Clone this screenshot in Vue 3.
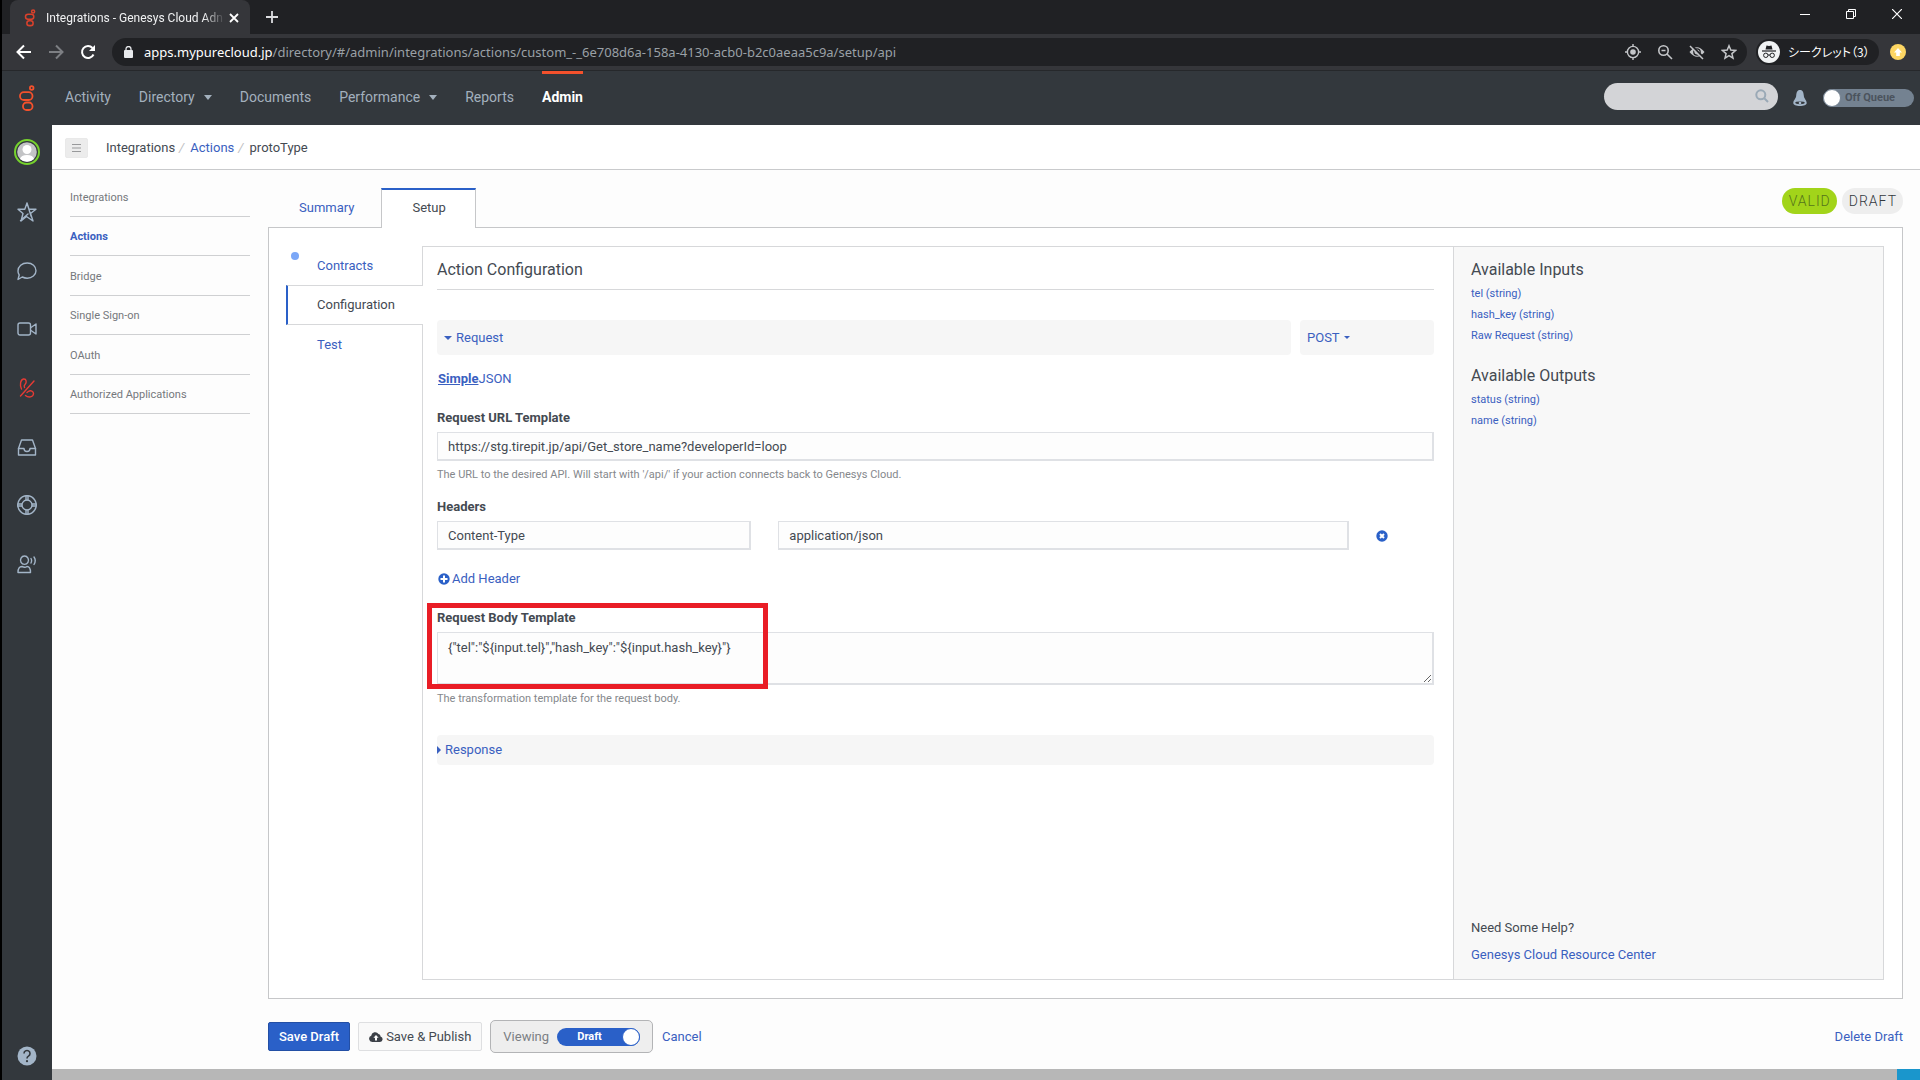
<template>
  <div class="screen">
    <div class="titlebar">
      <div class="browser-tab">
        <svg class="favicon" width="12" height="18" viewBox="0 0 16 26">
          <g fill="none" stroke="#d9412c" stroke-width="2.2">
            <circle cx="12.5" cy="3.5" r="2.2" />
            <rect x="1.5" y="7.5" width="12" height="7.5" rx="3.7" />
            <rect x="3.5" y="17" width="9" height="7" rx="3.5" />
          </g>
        </svg>
        <span class="browser-tab-title">Integrations - Genesys Cloud Adn</span>
        <button class="icon-button" aria-label="Close tab">
          <svg width="10" height="10" viewBox="0 0 10 10" stroke="#fff" stroke-width="1.8">
            <path d="M1 1l8 8M9 1l-8 8" />
          </svg>
        </button>
      </div>
      <button class="icon-button new-tab" aria-label="New tab">
        <svg width="12" height="12" viewBox="0 0 12 12" stroke="#dcdde0" stroke-width="1.8">
          <path d="M6 0v12M0 6h12" />
        </svg>
      </button>
      <div class="window-buttons">
        <button class="icon-button" aria-label="Minimize">
          <svg width="10" height="10" viewBox="0 0 10 10" stroke="#fff"><path d="M0 5.5h10" /></svg>
        </button>
        <button class="icon-button" aria-label="Restore">
          <svg width="10" height="10" viewBox="0 0 10 10" fill="none" stroke="#fff">
            <path d="M.5 2.5h7v7h-7zM2.5 2.5v-2h7v7h-2" />
          </svg>
        </button>
        <button class="icon-button" aria-label="Close">
          <svg width="10" height="10" viewBox="0 0 10 10" stroke="#fff" stroke-width="1.2">
            <path d="M0 0l10 10M10 0L0 10" />
          </svg>
        </button>
      </div>
    </div>

    <div class="toolbar">
      <button class="icon-button" aria-label="Back">
        <svg width="16" height="16" viewBox="0 0 16 16" fill="none" stroke="#fff" stroke-width="2">
          <path d="M15 8H2M8 1.5L1.5 8 8 14.5" />
        </svg>
      </button>
      <button class="icon-button" aria-label="Forward">
        <svg width="16" height="16" viewBox="0 0 16 16" fill="none" stroke="#7d7f83" stroke-width="2">
          <path d="M1 8h13M8 1.5L14.5 8 8 14.5" />
        </svg>
      </button>
      <button class="icon-button" aria-label="Reload">
        <svg width="16" height="16" viewBox="0 0 16 16" fill="none" stroke="#fff" stroke-width="2">
          <path d="M13.5 10.5A6 6 0 1 1 12.5 4" />
          <path d="M15 1v6H9z" fill="#fff" stroke="none" />
        </svg>
      </button>
      <div class="address">
        <svg width="9" height="12" viewBox="0 0 9 12">
          <rect y="4" width="9" height="8" rx="1" fill="#e8eaed" />
          <path d="M2 5V3a2.5 2.5 0 0 1 5 0v2" fill="none" stroke="#e8eaed" stroke-width="1.3" />
        </svg>
        <span class="url"><span class="url-host">apps.mypurecloud.jp</span>/directory/#/admin/integrations/actions/custom_-_6e708d6a-158a-4130-acb0-b2c0aeaa5c9a/setup/api</span>
        <div class="address-icons">
          <svg width="16" height="16" viewBox="0 0 16 16" fill="none" stroke="#c4c6c9" stroke-width="1.4">
            <circle cx="8" cy="8" r="5.6" />
            <circle cx="8" cy="8" r="2.8" fill="#c4c6c9" stroke="none" />
            <path d="M8 0v3M8 13v3M0 8h3M13 8h3" />
          </svg>
          <svg width="16" height="16" viewBox="0 0 16 16" fill="none" stroke="#c4c6c9" stroke-width="1.6">
            <circle cx="6.5" cy="6.5" r="4.7" />
            <path d="M4.5 6.5h4M10 10l5 5" />
          </svg>
          <svg width="16" height="16" viewBox="0 0 16 16">
            <path d="M.5 8Q8-1.500 15.5 8 8 17.5.5 8z" fill="#c4c6c9" />
            <circle cx="8" cy="8" r="3.2" fill="none" stroke="#202124" stroke-width="1.3" />
            <path d="M1.5.5l14 14" stroke="#202124" stroke-width="2" />
            <path d="M1 2l13 13" stroke="#c4c6c9" stroke-width="1.5" />
          </svg>
          <svg width="16" height="16" viewBox="0 0 16 16" fill="none" stroke="#c4c6c9" stroke-width="1.5">
            <path d="M8 1.8l1.8 4.300 4.700.4-3.600 3.100 1.100 4.600L8 11.700l-4 2.500 1.100-4.600L1.500 6.500l4.700-.4z" />
          </svg>
        </div>
      </div>
      <div class="incognito">
        <svg width="22" height="22" viewBox="0 0 22 22">
          <circle cx="11" cy="11" r="11" fill="#f1f3f4" />
          <path d="M7.5 8.500l1-4 2.500.6 2.500-.6 1 4z" fill="#202124" />
          <path d="M4 10h14" stroke="#202124" stroke-width="1.2" />
          <g fill="none" stroke="#202124">
            <circle cx="7.8" cy="14.3" r="2.2" />
            <circle cx="14.2" cy="14.3" r="2.2" />
            <path d="M10 14h2" />
          </g>
        </svg>
        <span>シークレット（3）</span>
      </div>
      <button class="icon-button" aria-label="Update">
        <svg width="16" height="16" viewBox="0 0 16 16">
          <circle cx="8" cy="8" r="8" fill="#fdd663" />
          <path d="M8 4l4 4.500H9.800V12H6.200V8.500H4z" fill="#fff" />
        </svg>
      </button>
    </div>

    <header class="app-header">
      <svg class="logo" width="16" height="26" viewBox="0 0 16 26">
        <g fill="none" stroke="#f4512c" stroke-width="1.8">
          <circle cx="12.7" cy="3" r="1.8" />
          <rect x="1" y="7.2" width="12.5" height="7.8" rx="3.8" />
          <rect x="4" y="17.5" width="9.5" height="7.5" rx="3.5" />
        </g>
      </svg>
      <nav class="main-nav">
        <a
          v-for="item in mainNav"
          :key="item.label"
          href="#"
          :class="{ active: item.active }"
        >
          {{ item.label }}
          <svg v-if="item.menu" width="8" height="5" viewBox="0 0 8 5">
            <path d="M0 0h8L4 5z" fill="currentColor" />
          </svg>
        </a>
      </nav>
      <div class="search">
        <input type="text" aria-label="Search" />
        <svg width="14" height="14" viewBox="0 0 14 14" fill="none" stroke="#9aa9b6" stroke-width="2">
          <circle cx="5.8" cy="5.8" r="4.5" />
          <path d="M9 9l4 4" />
        </svg>
      </div>
      <svg width="14" height="16" viewBox="0 0 14 16">
        <path d="M7 0C4 0 3.500 2.500 3.200 5.500 3 9 .3 10 .3 13c0 2 3 3 6.700 3s6.700-1 6.700-3c0-3-2.700-4-2.900-7.500C10.500 2.500 10 0 7 0z" fill="#a3b5c8" />
        <ellipse cx="7" cy="12.8" rx="4.8" ry="1.4" fill="#33383d" />
        <circle cx="7" cy="13" r="1.3" fill="#a3b5c8" />
      </svg>
      <label class="queue-switch">
        <input type="checkbox" />
        <span>Off Queue</span>
      </label>
    </header>

    <div class="workspace">
      <aside class="rail">
        <svg width="26" height="26" viewBox="0 0 26 26">
          <circle cx="13" cy="13" r="12" fill="#33383d" stroke="#76d22d" stroke-width="2" />
          <circle cx="13" cy="13" r="9.8" fill="#c3c4c6" />
          <circle cx="13" cy="10.5" r="4.5" fill="#fff" />
          <path d="M6 20q1-4 7-4t7 4q-3 2.800-7 2.800T6 20z" fill="#fff" />
        </svg>
        <div class="rail-icons">
          <button v-for="icon in railIcons" :key="icon.name" class="icon-button" :aria-label="icon.name">
            <svg
              width="20"
              height="20"
              viewBox="0 0 20 20"
              fill="none"
              :stroke="icon.color || '#a3b5c8'"
              stroke-width="1.4"
              stroke-linejoin="round"
              stroke-linecap="round"
            >
              <path v-for="d in icon.paths" :key="d" :d="d" />
            </svg>
          </button>
        </div>
        <button class="icon-button help" aria-label="Help">
          <svg width="20" height="20" viewBox="0 0 20 20">
            <circle cx="10" cy="10" r="9.5" fill="#a3b5c8" />
            <path d="M7 7.500a3 3 0 1 1 4.500 2.600Q10 11 10 12.500" fill="none" stroke="#33383d" stroke-width="1.6" />
            <circle cx="10" cy="15.2" r="1.1" fill="#33383d" />
          </svg>
        </button>
      </aside>

      <main class="page">
        <div class="breadcrumbs">
          <button class="menu-button" aria-label="Toggle menu">
            <svg width="9" height="8" viewBox="0 0 9 8" stroke="#98999b"><path d="M0 .5h9M0 4h9M0 7.500h9" /></svg>
          </button>
          <span>Integrations</span><i>/</i><a href="#">Actions</a><i>/</i><span>protoType</span>
        </div>

        <div class="page-body">
          <ul class="side-menu">
            <li v-for="name in sideMenu" :key="name">
              <a href="#" :class="{ active: name === 'Actions' }">{{ name }}</a>
            </li>
          </ul>

          <section class="content">
            <div class="tabs">
              <a href="#" class="tab">Summary</a>
              <a href="#" class="tab active">Setup</a>
              <div class="badges">
                <span class="badge valid">VALID</span>
                <span class="badge">DRAFT</span>
              </div>
            </div>

            <div class="panel">
              <nav class="steps">
                <a href="#" class="step changed">Contracts</a>
                <a href="#" class="step active">Configuration</a>
                <a href="#" class="step">Test</a>
              </nav>

              <div class="config">
                <h1>Action Configuration</h1>
                <div class="request-row">
                  <button class="bar request">
                    <svg width="8" height="4" viewBox="0 0 8 4"><path d="M0 0h8L4 4z" fill="currentColor" /></svg>
                    Request
                  </button>
                  <label class="bar method">
                    <select v-model="method" aria-label="Method">
                      <option>POST</option>
                    </select>
                    <svg width="6" height="3" viewBox="0 0 6 3"><path d="M0 0h6L3 3z" fill="currentColor" /></svg>
                  </label>
                </div>
                <div class="modes"><a href="#" class="selected">Simple</a><a href="#">JSON</a></div>

                <label class="field-label" for="url">Request URL Template</label>
                <input id="url" v-model="url" type="text" class="field" />
                <p class="hint">The URL to the desired API. Will start with '/api/' if your action connects back to Genesys Cloud.</p>

                <label class="field-label" for="header-name">Headers</label>
                <div class="header-row">
                  <input id="header-name" v-model="headerName" type="text" class="field" />
                  <input v-model="headerValue" type="text" class="field" aria-label="Header value" />
                  <button class="icon-button remove" aria-label="Remove header">
                    <svg width="12" height="12" viewBox="0 0 12 12">
                      <circle cx="6" cy="6" r="5.7" fill="#2a60c8" />
                      <path d="M4 4l4 4M8 4L4 8" stroke="#fff" stroke-width="2" />
                    </svg>
                  </button>
                </div>
                <button class="add-header">
                  <svg width="12" height="12" viewBox="0 0 12 12">
                    <circle cx="6" cy="6" r="5.7" fill="#2a60c8" />
                    <path d="M6 2.500v7M2.500 6h7" stroke="#fff" stroke-width="2" />
                  </svg>
                  Add Header
                </button>

                <div class="body-field">
                  <label class="field-label" for="body">Request Body Template</label>
                  <textarea id="body" v-model="body" class="field"></textarea>
                  <div class="marker"></div>
                </div>
                <p class="hint">The transformation template for the request body.</p>

                <button class="bar response">
                  <svg width="4" height="8" viewBox="0 0 4 8"><path d="M0 0v8l4-4z" fill="currentColor" /></svg>
                  Response
                </button>
              </div>

              <aside class="info">
                <h2>Available Inputs</h2>
                <a v-for="name in inputs" :key="name" href="#">{{ name }}</a>
                <h2>Available Outputs</h2>
                <a v-for="name in outputs" :key="name" href="#">{{ name }}</a>
                <div class="info-help">
                  <p>Need Some Help?</p>
                  <a href="#">Genesys Cloud Resource Center</a>
                </div>
              </aside>
            </div>

            <div class="actions">
              <button class="button primary">Save Draft</button>
              <button class="button">
                <svg width="14" height="10" viewBox="0 0 14 10">
                  <path d="M3.200 10a3.200 3.200 0 0 1-1-6.200A4 4 0 0 1 9.500 2a2.300 2.300 0 0 1 2 2.500A2.800 2.800 0 0 1 11 10z" fill="#3c4148" />
                  <path d="M7 3l2.600 2.800H8V8.500H6V5.800H4.400z" fill="#fff" />
                </svg>
                Save &amp; Publish
              </button>
              <label class="viewing">
                Viewing
                <span class="draft-switch">
                  <span>Draft</span>
                  <input v-model="viewDraft" type="checkbox" />
                </span>
              </label>
              <a href="#">Cancel</a>
              <a href="#" class="delete">Delete Draft</a>
            </div>
          </section>
        </div>
        <div class="bottom-bar"></div>
      </main>
    </div>
  </div>
</template>

<script setup>
import { ref } from 'vue';

const mainNav = [
  { label: 'Activity' },
  { label: 'Directory', menu: true },
  { label: 'Documents' },
  { label: 'Performance', menu: true },
  { label: 'Reports' },
  { label: 'Admin', active: true },
];

const railIcons = [
  {
    name: 'Favorites',
    paths: ['M10 1l2 6.200h7l-5.500 4.300 2.500 7.500-6.500-4.500-5.500 4.500 2-7.500L1 7.200h6.800zM10 1l4 13M3.500 18.500L11 12'],
  },
  {
    name: 'Chat',
    paths: ['M1 18.500l1.200-4.500A8 7 0 0 1 1 10C1 5.500 5 2 10.200 2S19 5.500 19 9.700s-4 7.500-8.800 7.500c-2 0-3.500-.5-5-1.200z'],
  },
  {
    name: 'Video',
    paths: ['M3 4h8.500a2 2 0 0 1 2 2v8a2 2 0 0 1-2 2H3a2 2 0 0 1-2-2V6a2 2 0 0 1 2-2z', 'M14 8.500L19 5v10l-5-3.500'],
  },
  {
    name: 'Phone',
    color: '#e63b35',
    paths: ['M17 3L3.500 18', 'M4.500 11C2.500 7 3.500 1.500 6.500 1c3-.3 3.500 3.500 1.500 5.500-1 1-1 2-.5 3', 'M8.500 17.500c3 2.500 7.500 1.500 8-1.500.3-3-3-4-5.200-2.500l-1.300 1'],
  },
  {
    name: 'Inbox',
    paths: ['M1.500 18V11.500L4.500 3h11l3 8.500V18z', 'M1.500 11.500h5.500q0 3 3 3t3-3h5.500'],
  },
  {
    name: 'Support',
    paths: ['M10 .8a9.200 9.200 0 1 0 .01 0z', 'M10 5a5 5 0 1 0 .01 0z', 'M9 1v4M11 1v4M9 15v4M11 15v4M1 9h4M1 11h4M15 9h4M15 11h4'],
  },
  {
    name: 'Agent',
    paths: ['M7.500 2a4 4.200 0 1 0 .01 0z', 'M1 18.500c0-4 2-6 4-6 2 1 3.500 1 5 0 2 0 3.500 2 3.500 6z', 'M14 4.500q1.200 2 0 4.500M17 3q2.500 3.500 0 7.500'],
  },
];

const sideMenu = ['Integrations', 'Actions', 'Bridge', 'Single Sign-on', 'OAuth', 'Authorized Applications'];

const inputs = ['tel (string)', 'hash_key (string)', 'Raw Request (string)'];
const outputs = ['status (string)', 'name (string)'];

const method = ref('POST');
const url = ref('https://stg.tirepit.jp/api/Get_store_name?developerId=loop');
const headerName = ref('Content-Type');
const headerValue = ref('application/json');
const body = ref('{"tel":"${input.tel}","hash_key":"${input.hash_key}"}');
const viewDraft = ref(true);
</script>

<style>
body {
  background: #000;
}
</style>

<style scoped>
.screen {
  box-sizing: border-box;
  min-height: 100vh;
  display: flex;
  flex-direction: column;
  border-left: 2px solid #000;
  background: #fdfdfd;
  color: #444a52;
  font-family: Roboto, sans-serif;
  font-size: 13px;
  line-height: 16px;
}

.screen * {
  box-sizing: border-box;
}

svg {
  display: block;
  flex: none;
}

a {
  color: #3a60c0;
  text-decoration: none;
}

button,
input,
select,
textarea {
  font: inherit;
  color: inherit;
}

.icon-button {
  display: flex;
  align-items: center;
  justify-content: center;
  padding: 0;
  background: none;
  border: none;
  cursor: pointer;
}

/* browser window */
.titlebar {
  display: flex;
  height: 34px;
  padding-left: 8px;
  background: #202124;
}

.browser-tab {
  display: flex;
  align-items: center;
  width: 240px;
  padding: 2px 11px 0 14px;
  border-radius: 8px 8px 0 0;
  background: #35363a;
}

.browser-tab-title {
  flex: 1;
  margin: 0 4px 0 10px;
  overflow: hidden;
  white-space: nowrap;
  color: #f0f1f2;
  font-size: 12px;
  mask-image: linear-gradient(to right, #000 88%, transparent);
}

.new-tab {
  margin-left: 16px;
}

.window-buttons {
  display: flex;
  margin-left: auto;
}

.window-buttons .icon-button {
  width: 46px;
  height: 28px;
}

.toolbar {
  display: flex;
  align-items: center;
  gap: 16px;
  height: 37px;
  padding: 0 14px;
  background: #35363a;
  border-bottom: 1px solid #26282b;
}

.address {
  display: flex;
  flex: 1;
  align-items: center;
  height: 28px;
  margin-right: -7px;
  padding: 0 10px 0 12px;
  border-radius: 14px;
  background: #202124;
}

.url {
  margin-left: 11px;
  color: #9aa0a6;
  font-family: 'Noto Sans', sans-serif;
  font-size: 13px;
}

.url-host {
  color: #fff;
}

.address-icons {
  display: flex;
  gap: 16px;
  margin-left: auto;
}

.incognito {
  display: flex;
  align-items: center;
  gap: 8px;
  width: 123px;
  height: 26px;
  padding-left: 2px;
  border-radius: 13px;
  background: #202124;
  color: #fff;
  font-family: 'Noto Sans CJK JP', sans-serif;
  font-size: 12px;
  font-feature-settings: 'palt';
  white-space: nowrap;
}

.toolbar > .icon-button:last-child {
  margin-left: -5px;
}

/* application header */
.app-header {
  display: flex;
  align-items: center;
  height: 54px;
  padding-right: 6px;
  background: #33383d;
}

.logo {
  margin: 0 21px 0 17px;
}

.main-nav {
  display: flex;
  align-self: stretch;
  gap: 28px;
  margin-left: 9px;
}

.main-nav a {
  display: flex;
  align-items: center;
  gap: 9px;
  padding-bottom: 5px;
  border-top: 3px solid transparent;
  color: #a3b0bd;
  font-size: 14px;
}

.main-nav .active {
  border-color: #f4512c;
  color: #fff;
  font-weight: 700;
}

.search {
  display: flex;
  align-items: center;
  width: 174px;
  height: 27px;
  margin: 0 15px 4px auto;
  padding: 0 9px 0 12px;
  border-radius: 14px;
  background: #d3d4d7;
}

.search input {
  flex: 1;
  min-width: 0;
  padding: 0;
  border: none;
  outline: none;
  background: none;
}

.queue-switch {
  display: flex;
  align-items: center;
  gap: 4px;
  width: 91px;
  height: 18px;
  margin-left: 16px;
  border-radius: 9px;
  background: #748291;
  color: #4b535d;
  font-size: 11px;
  font-weight: 700;
}

.queue-switch input,
.draft-switch input {
  width: 18px;
  height: 18px;
  margin: 0;
  appearance: none;
  border: 1px solid #748291;
  border-radius: 50%;
  background: #fff;
}

.workspace {
  display: flex;
  flex: 1;
}

.rail {
  display: flex;
  flex-direction: column;
  align-items: center;
  width: 50px;
  padding: 14px 0;
  background: #33383d;
}

.rail-icons {
  display: grid;
  grid-auto-rows: 1fr;
  height: 410px;
  margin-top: 18px;
}

.help {
  margin-top: auto;
}

.page {
  display: flex;
  flex: 1;
  flex-direction: column;
}

.breadcrumbs {
  display: flex;
  align-items: center;
  height: 45px;
  padding: 1px 0 0 13px;
  border-bottom: 1px solid #c9cacc;
  background: #fff;
}

.menu-button {
  display: flex;
  align-items: center;
  justify-content: center;
  width: 23px;
  height: 20px;
  margin-right: 18px;
  padding: 0;
  border: 1px solid #e9e9e9;
  border-radius: 2px;
  background: #ececec;
}

.breadcrumbs i {
  margin: 0 6px 0 4px;
  color: #c0c1c3;
}

.page-body {
  display: flex;
  flex: 1;
  gap: 18px;
  padding: 18px 17px 16px 18px;
}

.side-menu {
  display: grid;
  grid-auto-rows: 1fr;
  width: 180px;
  height: 237px;
  margin: -11px 0 0;
  padding: 0;
  list-style: none;
}

.side-menu li {
  display: flex;
  align-items: center;
  padding-top: 3px;
  border-bottom: 1px solid #cfd0d2;
}

.side-menu a {
  color: #75787c;
  font-size: 11px;
}

.side-menu .active {
  color: #3a60c0;
  font-weight: 700;
}

.content {
  display: flex;
  flex: 1;
  flex-direction: column;
}

.tabs {
  display: flex;
  height: 40px;
}

.tab {
  padding: 12px 27px 0 31px;
  line-height: 16px;
}

.tab.active {
  z-index: 1;
  padding: 10px 29px 0 30px;
  border: solid #c6c7c9;
  border-width: 2px 1px 0;
  border-top-color: #2a60c8;
  background: #fff;
  color: #444a52;
}

.badges {
  display: flex;
  gap: 5px;
  margin-left: auto;
}

.badge {
  height: 26px;
  padding: 0 6px 0 7px;
  border-radius: 13px;
  background: #eee;
  color: #33383d;
  font-size: 14px;
  font-weight: 300;
  letter-spacing: 1px;
  line-height: 26px;
}

.valid {
  background: #a2d41a;
  color: #55751a;
}

.panel {
  display: flex;
  flex: 1;
  margin-top: -1px;
  padding: 18px 18px 18px 17px;
  border: 1px solid #c6c7c9;
  background: #fff;
}

.steps {
  width: 136px;
}

.step {
  display: block;
  position: relative;
  height: 39px;
  padding: 12px 0 0 31px;
}

.step.active {
  z-index: 1;
  height: 40px;
  margin-right: -1px;
  padding: 11px 0 0 29px;
  border: solid #d7d8da;
  border-width: 1px 0 1px 2px;
  border-left-color: #2a60c8;
  background: #fff;
  color: #444a52;
}

/* unsaved changes dot */
.changed::before {
  content: '';
  position: absolute;
  top: 6px;
  left: 5px;
  width: 8px;
  height: 8px;
  border-radius: 50%;
  background: #7ba7f7;
}

.config {
  flex: 1;
  padding: 0 19px 0 14px;
  border: solid #d7d8da;
  border-width: 1px 0 1px 1px;
}

h1,
h2 {
  margin: 0;
  font-size: 16px;
  font-weight: 400;
  line-height: 20px;
}

h1 {
  padding: 13px 0 9px;
  border-bottom: 1px solid #d7d8da;
}

.request-row {
  display: flex;
  gap: 9px;
  margin-top: 30px;
}

.bar {
  display: flex;
  align-items: center;
  gap: 4px;
  padding: 0;
  border: none;
  border-radius: 4px;
  background: #f6f6f6;
  color: #3a60c0;
  font-size: 13px;
}

.request {
  flex: 1;
  height: 35px;
  padding-left: 7px;
}

.method {
  width: 134px;
  padding-left: 7px;
}

.method select {
  padding: 0;
  border: none;
  appearance: none;
  background: none;
}

.modes {
  margin: 16px 1px;
}

.selected {
  font-weight: 700;
  text-decoration: underline;
}

.field-label {
  display: block;
  margin: 23px 0 6px;
  font-weight: 700;
}

.hint + .field-label {
  margin-top: 16px;
}

.field {
  display: block;
  width: 100%;
  height: 29px;
  padding: 0 10px;
  border: 2px solid #dfe1e5;
  border-width: 1px 2px 2px 1px;
  background: #fdfdfd;
}

.hint {
  margin: 6px 0 0;
  color: #85888c;
  font-size: 11px;
}

.header-row {
  display: grid;
  grid-template-columns: 314fr 570fr 58px;
  gap: 27px;
}

.remove {
  justify-content: start;
}

.add-header {
  display: flex;
  align-items: center;
  gap: 2px;
  margin-top: 21px;
  padding: 0 1px;
  border: none;
  background: none;
  color: #3a60c0;
}

.body-field {
  position: relative;
}

textarea.field {
  height: 53px;
  padding: 7px 10px;
  resize: vertical;
}

.marker {
  position: absolute;
  top: -7px;
  left: -10px;
  width: 341px;
  height: 86px;
  border: 5px solid #e91d26;
  pointer-events: none;
}

.response {
  width: 100%;
  height: 30px;
  margin-top: 28px;
}

.info {
  display: flex;
  flex-direction: column;
  width: 431px;
  padding: 13px 17px 16px;
  border: 1px solid #d7d8da;
  background: #f8f8f8;
}

.info h2 {
  margin-bottom: 6px;
}

.info a {
  margin-bottom: 5px;
  font-size: 11px;
}

.info a + h2 {
  margin-top: 17px;
}

.info-help {
  margin-top: auto;
}

.info-help p {
  margin: 0 0 11px;
}

.info .info-help a {
  font-size: 13px;
}

.actions {
  display: flex;
  align-items: center;
  gap: 8px;
  height: 33px;
  margin-top: 21px;
}

.button {
  display: flex;
  align-items: center;
  gap: 3px;
  height: 29px;
  padding: 0 10px;
  border: 1px solid #dedfe1;
  border-radius: 2px;
  background: #f9f9f9;
}

.primary {
  border-color: #234fa5;
  background: #2a60c8;
  color: #fff;
  font-weight: 500;
}

.viewing {
  display: flex;
  align-items: center;
  gap: 8px;
  height: 33px;
  padding: 0 12px;
  border: 1px solid #b3b4b6;
  border-radius: 5px;
  background: #eee;
  color: #7b7e83;
}

.draft-switch {
  display: flex;
  align-items: center;
  width: 83px;
  height: 18px;
  border-radius: 9px;
  background: #2a60c8;
  color: #fff;
  font-size: 11px;
  font-weight: 700;
}

.draft-switch span {
  flex: 1;
  text-align: center;
}

.draft-switch input {
  border-color: #2a60c8;
}

.actions > a {
  margin-left: 1px;
}

.actions .delete {
  margin-left: auto;
}

.bottom-bar {
  height: 11px;
  border-right: 23px solid #1a96cc;
  background: #b7b7b7;
}
</style>
